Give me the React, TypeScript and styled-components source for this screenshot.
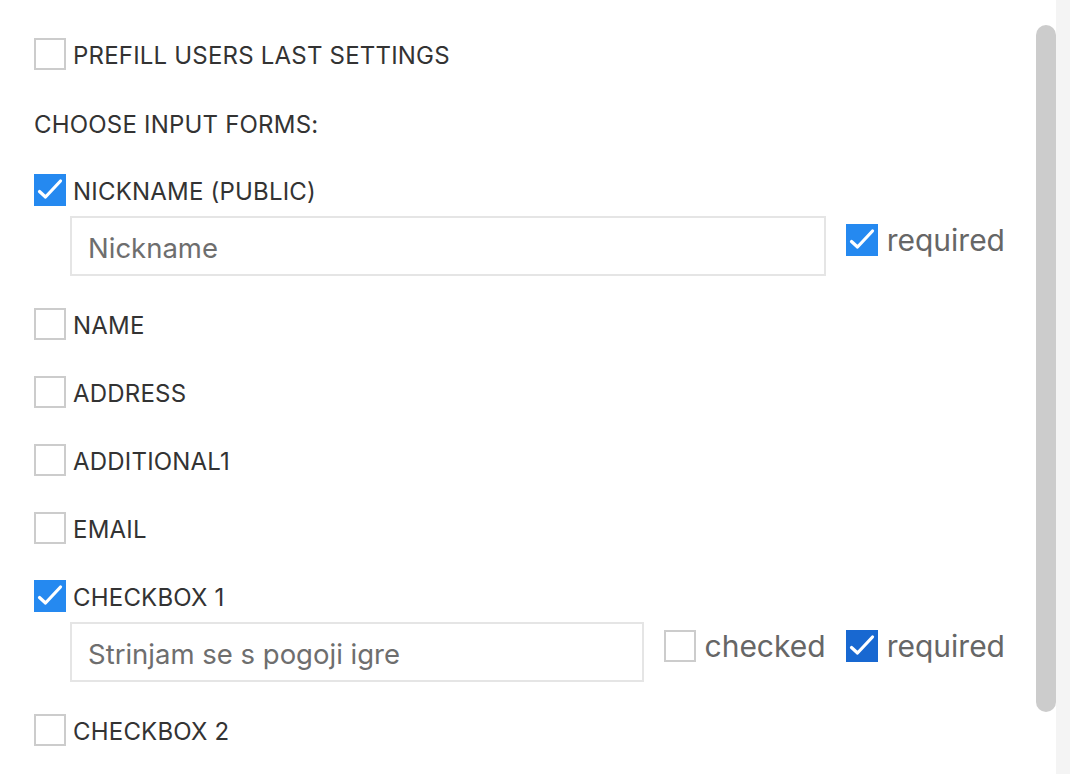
import React from "react";
import styled, { createGlobalStyle } from "styled-components";

const GlobalStyle = createGlobalStyle`
  html, body { margin: 0; padding: 0; background: #ffffff; }
  body { font-family: Inter, "Liberation Sans", Arial, sans-serif; }
  * { box-sizing: border-box; }
`;

const Page = styled.div`
  display: flex;
  width: 1070px;
  height: 774px;
  overflow: hidden;
  background: #ffffff;
`;

const Panel = styled.div`
  flex: 1;
  display: flex;
  flex-direction: column;
  padding: 38px 31px 0 34px;
`;

const ScrollTrack = styled.div`
  width: 20px;
  padding-top: 25px;
  background: #ffffff;
`;

const ScrollThumb = styled.div`
  width: 20px;
  height: 687px;
  border-radius: 10px;
  background: #cccccc;
`;

const Gutter = styled.div`
  width: 14px;
  background: #f4f4f4;
`;

const Item = styled.div<{ $space?: number }>`
  display: flex;
  flex-direction: column;
  padding-bottom: ${(p) => (p.$space ?? 36)}px;
`;

const CheckRow = styled.label`
  display: flex;
  align-items: flex-start;
  gap: 7px;
  height: 32px;
`;

const Box = styled.span<{ $checked?: boolean; $dark?: boolean }>`
  flex: none;
  width: 32px;
  height: 32px;
  display: flex;
  align-items: center;
  justify-content: center;
  background: ${(p) => (p.$checked ? (p.$dark ? "#1868d1" : "#2589f0") : "#ffffff")};
  border: ${(p) => (p.$checked ? "none" : "2px solid #cccccc")};
`;

const Label = styled.span`
  font-size: 24px;
  line-height: 29px;
  padding-top: 3px;
  letter-spacing: 0.2px;
  color: #333333;
  white-space: nowrap;
`;

const SectionTitle = styled.div`
  font-size: 24px;
  line-height: 31px;
  padding-top: 3px;
  letter-spacing: 0.2px;
  color: #333333;
  margin: 0 0 -2px;
`;

const InputRow = styled.div`
  display: flex;
  align-items: flex-start;
  gap: 20px;
  margin: 10px 0 0 36px;
`;

const TextInput = styled.input`
  flex: 1;
  min-width: 0;
  height: 60px;
  border: 2px solid #e5e5e5;
  padding: 3px 16px 0;
  font-family: inherit;
  font-size: 27.5px;
  color: #333333;
  outline: none;
  &::placeholder { color: #6e6e6e; }
`;

const OptionLabel = styled.label`
  display: flex;
  align-items: center;
  gap: 9px;
  height: 32px;
  margin-top: 8px;
`;

const OptionText = styled.span`
  font-size: 30px;
  line-height: 32px;
  color: #666666;
  white-space: nowrap;
`;

const Check = () => (
  <svg width="32" height="32" viewBox="0 0 32 32">
    <polyline
      points="5.5,17.5 11.5,23 26.5,7"
      fill="none"
      stroke="#ffffff"
      strokeWidth="3.2"
      strokeLinecap="round"
      strokeLinejoin="round"
    />
  </svg>
);

const Checkbox = ({ checked, dark }: { checked?: boolean; dark?: boolean }) => (
  <Box $checked={checked} $dark={dark}>{checked && <Check />}</Box>
);

const simple = ["NAME", "ADDRESS", "ADDITIONAL1", "EMAIL"];

export default function App() {
  return (
    <>
      <GlobalStyle />
      <Page>
        <Panel>
          <Item>
            <CheckRow>
              <Checkbox />
              <Label>PREFILL USERS LAST SETTINGS</Label>
            </CheckRow>
          </Item>
          <Item>
            <SectionTitle>CHOOSE INPUT FORMS:</SectionTitle>
          </Item>
          <Item $space={32}>
            <CheckRow>
              <Checkbox checked />
              <Label>NICKNAME (PUBLIC)</Label>
            </CheckRow>
            <InputRow>
              <TextInput placeholder="Nickname" />
              <OptionLabel>
                <Checkbox checked />
                <OptionText>required</OptionText>
              </OptionLabel>
            </InputRow>
          </Item>
          {simple.map((s) => (
            <Item key={s}>
              <CheckRow>
                <Checkbox />
                <Label>{s}</Label>
              </CheckRow>
            </Item>
          ))}
          <Item $space={32}>
            <CheckRow>
              <Checkbox checked />
              <Label>CHECKBOX 1</Label>
            </CheckRow>
            <InputRow>
              <TextInput placeholder="Strinjam se s pogoji igre" />
              <OptionLabel>
                <Checkbox />
                <OptionText>checked</OptionText>
              </OptionLabel>
              <OptionLabel>
                <Checkbox checked dark />
                <OptionText>required</OptionText>
              </OptionLabel>
            </InputRow>
          </Item>
          <Item>
            <CheckRow>
              <Checkbox />
              <Label>CHECKBOX 2</Label>
            </CheckRow>
          </Item>
        </Panel>
        <ScrollTrack>
          <ScrollThumb />
        </ScrollTrack>
        <Gutter />
      </Page>
    </>
  );
}
